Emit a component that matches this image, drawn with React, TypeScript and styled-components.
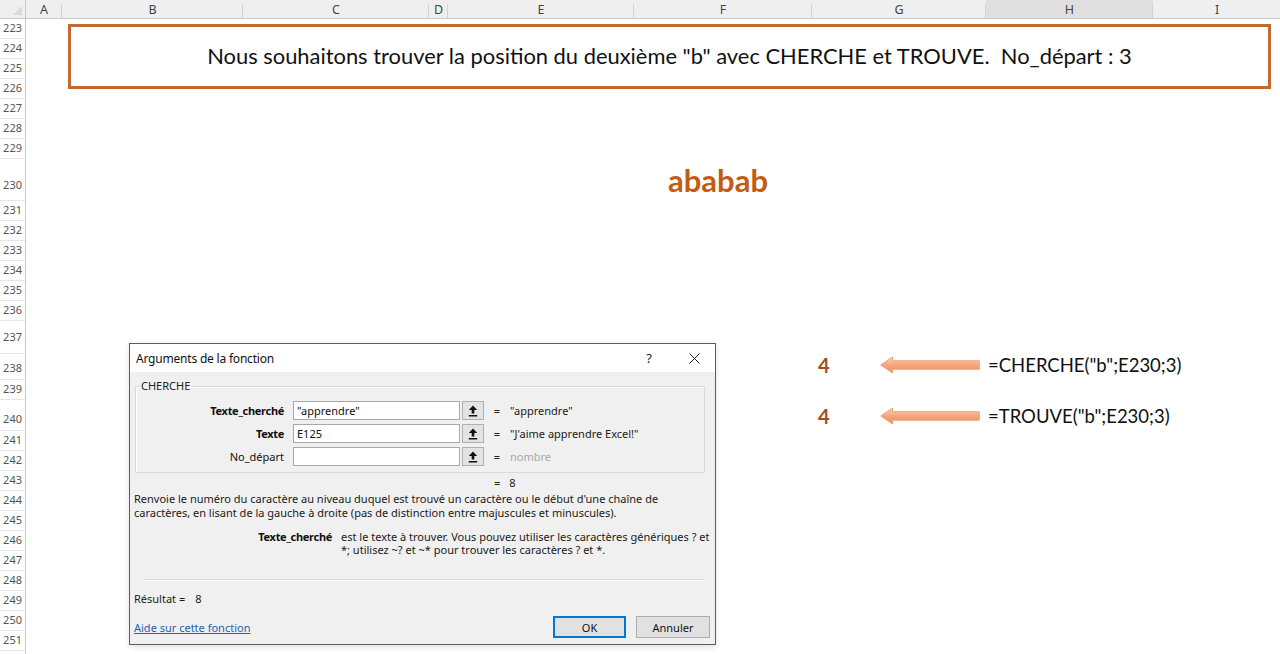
import React from 'react';
import styled, { createGlobalStyle } from 'styled-components';

const GlobalStyle = createGlobalStyle`
  html, body { margin: 0; padding: 0; background: #fff; }
  body { width: 1280px; height: 654px; overflow: hidden; font-family: "Noto Sans", "Liberation Sans", sans-serif; }
  * { box-sizing: border-box; }
`;

type Col = { name: string; w: number; selected?: boolean };
const columns: Col[] = [
  { name: 'A', w: 36 },
  { name: 'B', w: 181 },
  { name: 'C', w: 186 },
  { name: 'D', w: 19 },
  { name: 'E', w: 186 },
  { name: 'F', w: 178 },
  { name: 'G', w: 174 },
  { name: 'H', w: 167, selected: true },
  { name: 'I', w: 128 },
];

type Row = { n: number; h: number; pb: number };
const rowSpec: Record<number, { h: number; pb: number }> = {
  230: { h: 42, pb: 8 },
  237: { h: 33, pb: 9 },
  238: { h: 26, pb: 4 },
  240: { h: 31, pb: 4 },
};
const rows: Row[] = Array.from({ length: 29 }, (_, i) => {
  const n = 223 + i;
  const s = rowSpec[n] ?? { h: 20, pb: 3 };
  return { n, ...s };
});

const rowIndex = (n: number) => n - 222;

const Sheet = styled.div`
  width: 1280px;
  height: 654px;
  overflow: hidden;
  display: flex;
  flex-direction: column;
  background: #fff;
`;

const ColHeaderBar = styled.div`
  display: flex;
  flex: none;
  height: 19px;
  background: #efefef;
  border-bottom: 1px solid #c9c9c9;
`;

const Corner = styled.div`
  width: 26px;
  flex: none;
  position: relative;
  border-right: 1px solid #c9c9c9;
  &::after {
    content: '';
    position: absolute;
    right: 3px;
    bottom: 3px;
    border-style: solid;
    border-width: 0 0 9px 9px;
    border-color: transparent transparent #dadada transparent;
  }
`;

const ColHead = styled.div<{ $w: number; $selected?: boolean }>`
  width: ${(p) => p.$w}px;
  flex: none;
  position: relative;
  display: flex;
  align-items: center;
  justify-content: center;
  font-family: "Noto Sans", sans-serif;
  font-size: 12.5px;
  color: #444;
  background: ${(p) => (p.$selected ? '#dfdfdf' : 'transparent')};
  &::after {
    content: '';
    position: absolute;
    right: 0;
    top: 4px;
    bottom: 0;
    width: 1px;
    background: #d4d4d4;
  }
`;

const Body = styled.div`
  display: flex;
  flex: 1;
  min-height: 0;
`;

const RowHeaders = styled.div`
  width: 26px;
  flex: none;
  display: flex;
  flex-direction: column;
  border-right: 1px solid #c9c9c9;
  background: #fff;
`;

const RowHead = styled.div<{ $h: number; $pb: number }>`
  height: ${(p) => p.$h}px;
  flex: none;
  display: flex;
  align-items: flex-end;
  justify-content: flex-end;
  padding: 0 3px ${(p) => p.$pb}px 0;
  font-family: "Noto Sans", sans-serif;
  font-size: 11px;
  line-height: 14px;
  color: #555;
  border-bottom: 1px solid #e6e6e6;
`;

const Cells = styled.div`
  flex: 1;
  position: relative;
  display: grid;
  grid-template-columns: ${columns.map((c) => `${c.w}px`).join(' ')};
  grid-template-rows: ${rows.map((r) => `${r.h}px`).join(' ')};
  align-content: start;
`;

const TitleBox = styled.div`
  grid-row: 1 / 5;
  grid-column: 2 / 10;
  margin: 5px 10px 10px 6px;
  border: 3px solid #c26a2f;
  display: flex;
  align-items: center;
  justify-content: center;
  padding-bottom: 2px;
  font-family: Lato, "Open Sans", sans-serif;
  font-size: 21.9px;
  color: #111;
  white-space: pre;
`;

const BigText = styled.div`
  grid-row: ${rowIndex(230)};
  grid-column: 6;
  justify-self: start;
  align-self: center;
  margin: 0 0 0 34px;
  font-family: Lato, "Open Sans", sans-serif;
  font-weight: 700;
  font-size: 31px;
  line-height: 1;
  color: #c55a11;
`;

const ResultCell = styled.div<{ $row: number; $lift?: number }>`
  grid-row: ${(p) => p.$row};
  grid-column: 7;
  display: flex;
  align-items: center;
  justify-content: space-between;
  padding: 0 6px ${(p) => (p.$lift ?? 0) * 2}px 6px;
`;

const ResultNumber = styled.span`
  font-family: Lato, "Open Sans", sans-serif;
  font-weight: 700;
  font-size: 20px;
  color: #a0501c;
`;

const FormulaText = styled.div<{ $row: number; $lift?: number }>`
  grid-row: ${(p) => p.$row};
  grid-column: 8;
  align-self: center;
  padding-left: 2px;
  margin-bottom: ${(p) => (p.$lift ?? 0) * 2}px;
  white-space: nowrap;
  font-family: Lato, "Open Sans", sans-serif;
  font-size: 18.5px;
  color: #111;
`;

/* ---------- dialog ---------- */

const Dialog = styled.div`
  position: absolute;
  left: 103px;
  top: 324px;
  width: 587px;
  height: 302px;
  border: 1px solid #5c5c5c;
  background: #f0f0f0;
  display: flex;
  flex-direction: column;
  font-family: "Noto Sans", sans-serif;
  font-size: 11px;
  color: #1a1a1a;
  box-shadow: 0 2px 6px rgba(0, 0, 0, 0.12);
`;

const TitleBar = styled.div`
  height: 28px;
  flex: none;
  background: #fff;
  display: flex;
  align-items: center;
  justify-content: space-between;
  padding: 0 10px 0 6px;
`;

const DialogTitle = styled.span`
  font-size: 12px;
  letter-spacing: -0.2px;
  color: #111;
`;

const TitleButtons = styled.div`
  display: flex;
  align-items: center;
  gap: 24px;
`;

const HelpGlyph = styled.span`
  width: 20px;
  text-align: center;
  font-size: 13px;
  color: #222;
`;

const CloseButton = styled.span`
  width: 22px;
  display: flex;
  align-items: center;
  justify-content: center;
`;

const DialogBody = styled.div`
  flex: 1;
  display: flex;
  flex-direction: column;
  padding: 0 10px 0 4px;
`;

const GroupBox = styled.fieldset`
  margin: 7px 0 0 1px;
  padding: 8px 0 6px 0;
  border: 1px solid #d9d9d9;
  box-shadow: inset 1px 1px 0 #fff;
  min-width: 0;
`;

const GroupLegend = styled.legend`
  margin-left: 3px;
  padding: 0 2px;
  line-height: 14px;
  font-size: 11px;
  color: #222;
`;

const ArgGrid = styled.div`
  display: grid;
  grid-template-columns: 148px 176px 24px 26px 1fr;
  grid-auto-rows: 19px;
  row-gap: 4px;
  align-items: center;
`;

const ArgLabel = styled.span<{ $bold?: boolean }>`
  text-align: right;
  font-weight: ${(p) => (p.$bold ? 700 : 400)};
  letter-spacing: ${(p) => (p.$bold ? '-0.3px' : '0')};
  color: #111;
`;

const ArgInput = styled.div`
  margin-left: 9px;
  height: 19px;
  background: #fff;
  border: 1px solid #a8a8a8;
  padding-left: 3px;
  display: flex;
  align-items: center;
  color: #111;
`;

const RefButton = styled.div`
  margin-left: 2px;
  width: 22px;
  height: 19px;
  background: #e3e3e3;
  border: 1px solid #b0b0b0;
  display: flex;
  align-items: center;
  justify-content: center;
`;

const Equals = styled.span`
  text-align: center;
  color: #222;
`;

const ArgValue = styled.span<{ $muted?: boolean }>`
  white-space: nowrap;
  color: ${(p) => (p.$muted ? '#a8a8a8' : '#1a1a1a')};
`;

const FormulaResult = styled.div`
  margin-top: 3px;
  padding-left: 360px;
  line-height: 14px;
  display: flex;
  gap: 9px;
`;

const Description = styled.div`
  margin-top: 2px;
  line-height: 14px;
  white-space: nowrap;
`;

const ArgHelp = styled.div`
  margin-top: 10px;
  display: flex;
  line-height: 13px;
`;

const ArgHelpLabel = styled.span`
  width: 198px;
  flex: none;
  text-align: right;
  font-weight: 700;
  letter-spacing: -0.3px;
  color: #111;
`;

const ArgHelpText = styled.span`
  margin-left: 9px;
  white-space: nowrap;
`;

const Separator = styled.div`
  margin: 23px 0 0 11px;
  height: 2px;
  border-top: 1px solid #d6d6d6;
  border-bottom: 1px solid #fff;
`;

const ResultLine = styled.div`
  margin-top: 11px;
  line-height: 14px;
  display: flex;
  gap: 10px;
`;

const Footer = styled.div`
  margin: 10px -5px 0 0;
  display: flex;
  align-items: center;
  justify-content: space-between;
`;

const HelpLink = styled.a`
  color: #1e63b0;
  text-decoration: underline;
  cursor: pointer;
`;

const ButtonRow = styled.div`
  display: flex;
  gap: 10px;
`;

const DlgButton = styled.button<{ $primary?: boolean }>`
  width: ${(p) => (p.$primary ? 73 : 74)}px;
  height: 22px;
  font-family: "Noto Sans", sans-serif;
  font-size: 11px;
  color: #111;
  background: #e1e1e1;
  border: 1px solid ${(p) => (p.$primary ? '#0078d7' : '#adadad')};
  box-shadow: ${(p) => (p.$primary ? 'inset 0 0 0 1px #0078d7' : 'none')};
  padding: 0;
`;

/* ---------- drawings ---------- */

const BlockArrow: React.FC<{ id: string }> = ({ id }) => (
  <svg width="100" height="18" viewBox="0 0 100 18">
    <defs>
      <linearGradient id={id} x1="0" y1="0" x2="0" y2="1">
        <stop offset="0" stopColor="#fcd6bf" />
        <stop offset="0.45" stopColor="#f7a981" />
        <stop offset="1" stopColor="#f08b5f" />
      </linearGradient>
    </defs>
    <path
      d="M0.8 9 L12.5 1 L12.5 4.8 L99.3 4.8 L99.3 13.2 L12.5 13.2 L12.5 17 Z"
      fill={`url(#${id})`}
      stroke="#e7a17c"
      strokeWidth="1"
    />
  </svg>
);

const RefIcon = () => (
  <svg width="10" height="12" viewBox="0 0 10 12">
    <path d="M5 0.5 L9.2 5 L6.3 5 L6.3 8.6 L3.7 8.6 L3.7 5 L0.8 5 Z" fill="#111" />
    <rect x="0.8" y="10" width="8.4" height="1.5" fill="#111" />
  </svg>
);

const CloseIcon = () => (
  <svg width="11" height="11" viewBox="0 0 11 11">
    <path d="M0.5 0.5 L10.5 10.5 M10.5 0.5 L0.5 10.5" stroke="#222" strokeWidth="1" />
  </svg>
);

const args = [
  { label: 'Texte_cherché', bold: true, value: '"apprendre"', result: '"apprendre"' },
  { label: 'Texte', bold: true, value: 'E125', result: '"J\'aime apprendre Excel!"' },
  { label: 'No_départ', bold: false, value: '', result: 'nombre', muted: true },
];

export default function App() {
  return (
    <>
      <GlobalStyle />
      <Sheet>
        <ColHeaderBar>
          <Corner />
          {columns.map((c) => (
            <ColHead key={c.name} $w={c.w} $selected={c.selected}>
              {c.name}
            </ColHead>
          ))}
        </ColHeaderBar>
        <Body>
          <RowHeaders>
            {rows.map((r) => (
              <RowHead key={r.n} $h={r.h} $pb={r.pb}>
                {r.n}
              </RowHead>
            ))}
          </RowHeaders>
          <Cells>
            <TitleBox>
              Nous souhaitons trouver la position du deuxième "b" avec CHERCHE et TROUVE.  No_départ : 3
            </TitleBox>
            <BigText>ababab</BigText>

            <ResultCell $row={rowIndex(238)} $lift={2}>
              <ResultNumber>4</ResultNumber>
              <BlockArrow id="arrowA" />
            </ResultCell>
            <FormulaText $row={rowIndex(238)} $lift={2}>=CHERCHE("b";E230;3)</FormulaText>

            <ResultCell $row={rowIndex(240)}>
              <ResultNumber>4</ResultNumber>
              <BlockArrow id="arrowB" />
            </ResultCell>
            <FormulaText $row={rowIndex(240)}>=TROUVE("b";E230;3)</FormulaText>

            <Dialog>
              <TitleBar>
                <DialogTitle>Arguments de la fonction</DialogTitle>
                <TitleButtons>
                  <HelpGlyph>?</HelpGlyph>
                  <CloseButton>
                    <CloseIcon />
                  </CloseButton>
                </TitleButtons>
              </TitleBar>
              <DialogBody>
                <GroupBox>
                  <GroupLegend>CHERCHE</GroupLegend>
                  <ArgGrid>
                    {args.map((a) => (
                      <React.Fragment key={a.label}>
                        <ArgLabel $bold={a.bold}>{a.label}</ArgLabel>
                        <ArgInput>{a.value}</ArgInput>
                        <RefButton>
                          <RefIcon />
                        </RefButton>
                        <Equals>=</Equals>
                        <ArgValue $muted={a.muted}>{a.result}</ArgValue>
                      </React.Fragment>
                    ))}
                  </ArgGrid>
                </GroupBox>
                <FormulaResult>
                  <Equals>=</Equals>
                  <span>8</span>
                </FormulaResult>
                <Description>
                  Renvoie le numéro du caractère au niveau duquel est trouvé un caractère ou le début d'une chaîne de
                  <br />
                  caractères, en lisant de la gauche à droite (pas de distinction entre majuscules et minuscules).
                </Description>
                <ArgHelp>
                  <ArgHelpLabel>Texte_cherché</ArgHelpLabel>
                  <ArgHelpText>
                    est le texte à trouver. Vous pouvez utiliser les caractères génériques ? et
                    <br />
                    *; utilisez ~? et ~* pour trouver les caractères ? et *.
                  </ArgHelpText>
                </ArgHelp>
                <Separator />
                <ResultLine>
                  <span>Résultat =</span>
                  <span>8</span>
                </ResultLine>
                <Footer>
                  <HelpLink>Aide sur cette fonction</HelpLink>
                  <ButtonRow>
                    <DlgButton $primary>OK</DlgButton>
                    <DlgButton>Annuler</DlgButton>
                  </ButtonRow>
                </Footer>
              </DialogBody>
            </Dialog>
          </Cells>
        </Body>
      </Sheet>
    </>
  );
}
